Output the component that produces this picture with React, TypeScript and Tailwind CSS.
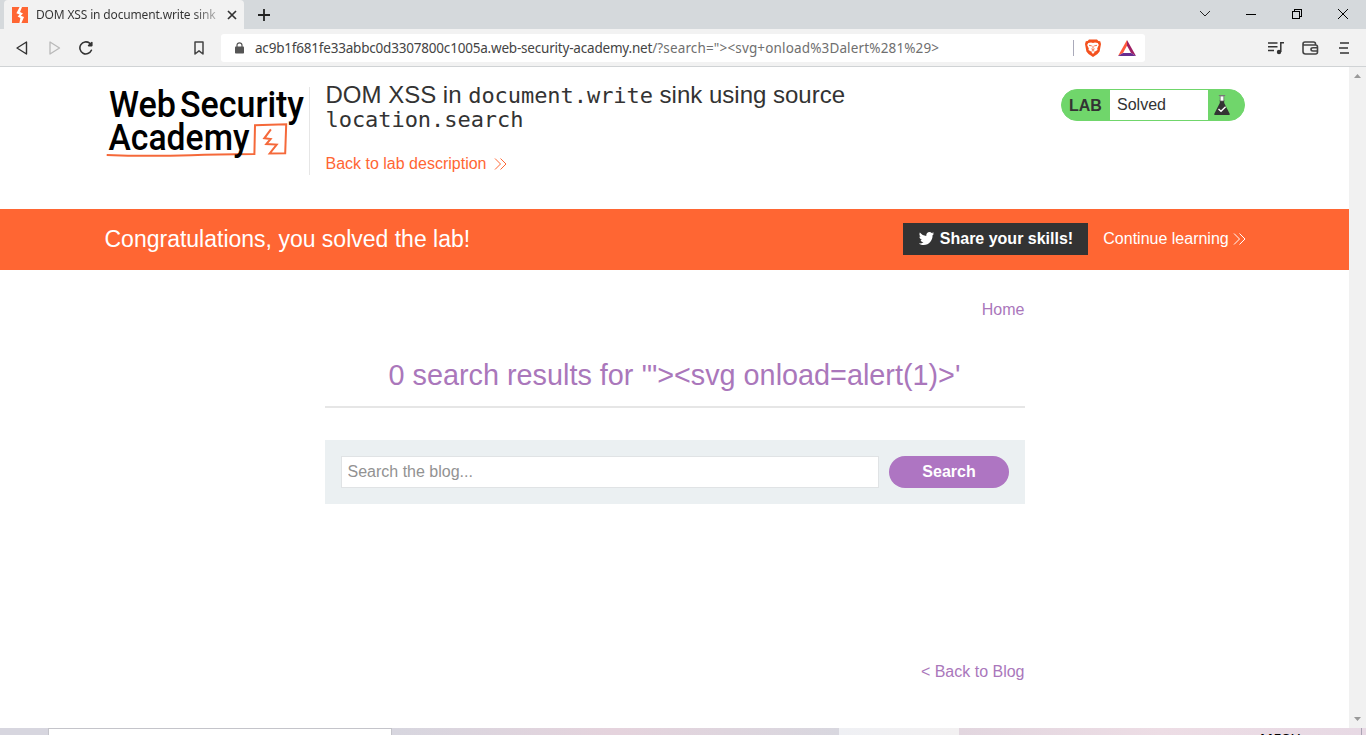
import React from "react";

function Chevrons({ color }: { color: string }) {
  return (
    <svg width="13" height="14" viewBox="0 0 13 14" fill="none" stroke={color} strokeWidth="1">
      <path d="M1 1.5 L6.5 7 L1 12.5 M6.5 1.5 L12 7 L6.5 12.5" />
    </svg>
  );
}

function TabStrip() {
  return (
    <div className="flex h-[29px] bg-[#d5d9dc] pl-1">
      <div className="flex w-[240px] items-center rounded-t-[4px] bg-[#f2f2f2] pl-2 pr-[7px]">
        <svg width="16" height="16" viewBox="0 0 16 16" className="shrink-0">
          <rect width="16" height="16" fill="#ff6633" />
          <path d="M7.6 0 L4.4 6.2 L7.6 7.4 L5.6 9.6 L8.4 11 L7.4 16 H9.4 L12 10 L8.8 8.8 L11 6.4 L8 5 L10 0 Z" fill="#fff" />
        </svg>
        <div className="ml-2 w-[182px] shrink-0 whitespace-nowrap bg-linear-to-r from-[#333] from-85% to-[#bbb] bg-clip-text font-['Noto_Sans',sans-serif] text-[12px] leading-[18px] tracking-[-0.16px] text-transparent">
          DOM XSS in document.write sink
        </div>
        <svg className="ml-[9px] shrink-0" width="10" height="10" viewBox="0 0 10 10" stroke="#333" strokeWidth="1.7">
          <path d="M1 1 L9 9 M9 1 L1 9" />
        </svg>
      </div>
      <svg className="ml-[14px] mt-[9px]" width="12" height="12" viewBox="0 0 12 12" stroke="#222" strokeWidth="1.8">
        <path d="M6 0 V12 M0 6 H12" />
      </svg>
      <div className="ml-auto flex h-[28px] items-center pr-[17px] text-black">
        <svg width="12" height="8" viewBox="0 0 12 8" fill="none" stroke="#222" strokeWidth="1"><path d="M1 1 L6 6 L11 1" /></svg>
        <svg className="ml-[35px]" width="10" height="10" viewBox="0 0 10 10" stroke="#000" shapeRendering="crispEdges"><path d="M0 5.5 H10" /></svg>
        <svg className="ml-[36px]" width="10" height="10" viewBox="0 0 10 10" fill="none" stroke="#000" shapeRendering="crispEdges"><path d="M.5 2.5 H7.5 V9.5 H.5 Z M2.5 2.5 V.5 H9.5 V7.5 H7.5" /></svg>
        <svg className="ml-[35px]" width="12" height="12" viewBox="0 0 12 12" stroke="#000" strokeWidth="1"><path d="M1 1 L11 11 M11 1 L1 11" /></svg>
      </div>
    </div>
  );
}

function Toolbar() {
  return (
    <div className="flex h-[38px] items-center border-b border-[#d0d3d5] bg-[#f2f2f2]">
      <svg className="ml-[16px]" width="12" height="14" viewBox="0 0 12 14" fill="none" stroke="#333" strokeWidth="1.4" strokeLinejoin="round"><path d="M10.5 1 V13 L1 7 Z" /></svg>
      <svg className="ml-[21px]" width="12" height="14" viewBox="0 0 12 14" fill="none" stroke="#b9b9b9" strokeWidth="1.3" strokeLinejoin="round"><path d="M1 1 V13 L10.5 7 Z" /></svg>
      <svg className="ml-[18px]" width="14" height="14" viewBox="0 0 14 14" fill="none" stroke="#333" strokeWidth="1.6" strokeLinecap="round">
        <path d="M12.4 9.3 A6 6 0 1 1 10.6 2.2" />
        <path d="M9.6 4.6 H12.8 V1.6 Q10.8 2.6 9.6 4.6 Z" fill="#333" strokeLinejoin="round" />
      </svg>
      <svg className="ml-[101px]" width="10" height="14" viewBox="0 0 10 14" fill="none" stroke="#444" strokeWidth="1.5" strokeLinejoin="round"><path d="M1 1 H9 V13 L5 9.8 L1 13 Z" /></svg>
      <div className="ml-[17px] flex h-[28px] w-[924px] items-center rounded-[3px] bg-white">
        <svg className="ml-[14px] shrink-0" width="9" height="12" viewBox="0 0 9 12">
          <path d="M2 5 V3.3 A2.5 2.5 0 0 1 7 3.3 V5" fill="none" stroke="#555" strokeWidth="1.2" />
          <rect x="0" y="4.5" width="9" height="7" rx=".8" fill="#555" />
        </svg>
        <div className="ml-[11px] w-[818px] whitespace-nowrap font-['Noto_Sans',sans-serif] text-[13.5px] leading-[20px] text-[#6f6f6f]">
          <span className="tracking-[-0.2px] text-[#444]">ac9b1f681fe33abbc0d3307800c1005a.web-security-academy.net</span>
          <span className="tracking-[0.15px]">{'/?search="><svg+onload%3Dalert%281%29>'}</span>
        </div>
        <div className="h-[16px] w-px shrink-0 bg-[#aaaaba]" />
        <svg className="ml-[11px] shrink-0" width="16" height="18" viewBox="0 0 16 18">
          <path d="M4 0.5 H12 L13.4 2 L15.2 2.2 L16 5 L14.6 12.5 L12.5 15 L8 18 L3.5 15 L1.4 12.5 L0 5 L.8 2.2 L2.6 2 Z" fill="#f4511e" />
          <path d="M3.3 4 L6 3.5 L8 4 L10 3.5 L12.7 4 L13.8 6 L12.2 9.5 L12.5 11 L10 12.5 L8 15 L6 12.5 L3.5 11 L3.8 9.5 L2.2 6 Z" fill="#fff" />
          <path d="M4 6.3 L6.8 6.9 M12 6.3 L9.2 6.9 M8 6.8 V9.6 M6.4 9.8 L8 10.6 L9.6 9.8 M6.5 12.3 L8 11.5 L9.5 12.3" fill="none" stroke="#f4511e" strokeWidth=".8" />
        </svg>
        <svg className="ml-[17px] shrink-0" width="18" height="16" viewBox="0 0 18 16">
          <path d="M9 0 L0 16 L5 12.9 L9 5.8 Z" fill="#ff5a3c" />
          <path d="M9 0 L18 16 L13 12.9 L9 5.8 Z" fill="#9e1f63" />
          <path d="M0 16 H18 L13 12.9 H5 Z" fill="#662d91" />
        </svg>
      </div>
      <svg className="ml-[123px]" width="16" height="14" viewBox="0 0 16 14" fill="none" stroke="#333" strokeWidth="1.5">
        <path d="M0 2 H9.5 M0 5.7 H9.5 M0 9.4 H6 M12.8 11 V1.8 H16" />
        <circle cx="11" cy="11" r="2.2" fill="#333" stroke="none" />
      </svg>
      <svg className="ml-[18px]" width="17" height="14" viewBox="0 0 17 14" fill="none" stroke="#444" strokeWidth="1.6">
        <path d="M13.5 4 V3 Q13.5 1 11.5 1 H3 Q1 1 1 3 V10.5 Q1 13 3.5 13 H13.5 Q15.5 13 15.5 11 V6 Q15.5 4 13.5 4 H3 Q1 4 1 2.7 M15.5 10 H11 Q9 10 9 8.3 Q9 6.7 11 6.7 H15.5" />
      </svg>
      <svg className="ml-[20px]" width="10" height="12" viewBox="0 0 10 12" stroke="#333" strokeWidth="1.5"><path d="M1 1 H10 M0 6 H9 M1 11 H10" /></svg>
    </div>
  );
}

function Logo() {
  return (
    <svg width="200" height="76" viewBox="0 0 200 76" className="shrink-0 overflow-visible">
      <path
        d="M164.9 42.3 L158.3 51.3 L164.6 52 L160.3 57 L170.7 57.6 L163.7 66.4 L179.2 66.2 L180.2 37.3 L149 38.3 L148.4 67 Q110 67.2 85 68.2 Q40 69.6 0.7 68"
        fill="none"
        stroke="#f5693a"
        strokeWidth="2"
      />
      <g fontFamily="Roboto, sans-serif" fontSize="36.5" fontWeight="500" fill="#000">
        <text x="3" y="30" textLength="67" lengthAdjust="spacingAndGlyphs">Web</text>
        <text x="74" y="30" textLength="124" lengthAdjust="spacingAndGlyphs">Security</text>
        <text x="2.5" y="62.8" textLength="141" lengthAdjust="spacingAndGlyphs">Academy</text>
      </g>
    </svg>
  );
}

function LabStatus() {
  return (
    <div className="ml-auto mt-[22px] flex h-[32px] w-[184px] overflow-hidden rounded-full border border-[#70d66b] bg-[#70d66b]">
      <div className="w-[48px] pl-[7px] text-[16px] font-bold leading-[31px] text-[#333]">LAB</div>
      <div className="w-[98px] bg-white pl-[7px] text-[16px] leading-[29px] text-[#333]">Solved</div>
      <svg className="ml-[6px] mt-[4px]" width="16" height="22" viewBox="0 0 16 22">
        <path d="M5.8 6 H10.2 V9 L15.8 20 Q16 21 15 21 H1 Q0 21 .2 20 L5.8 9 Z" fill="#333" />
        <path d="M6.2 2 H9.8 V7 H6.2 Z" fill="#fff" stroke="#666" strokeWidth=".7" />
        <path d="M4.8 1.5 H11.2" stroke="#777" />
        <path d="M4.5 15 L7 17.3 L11.6 12.8" fill="none" stroke="#fff" strokeWidth="1.4" />
      </svg>
    </div>
  );
}

function LabHeader() {
  return (
    <header className="flex h-[142px] pl-[106px] pr-[104px]">
      <div className="mt-[20px] flex h-[88px] w-[204px] border-r border-[#e6e6e6]"><Logo /></div>
      <div className="ml-[15.5px] pt-[16px]">
        <h2 className="text-[24px] leading-[24px] text-[#333]">
          DOM XSS in <code className="font-['DejaVu_Sans_Mono',monospace] text-[22px] leading-[20px] tracking-[-0.05px]">document.write</code> sink using source
          <br />
          <code className="font-['DejaVu_Sans_Mono',monospace] text-[22px] leading-[20px] tracking-[-0.05px]">location.search</code>
        </h2>
        <a className="mt-[24px] flex items-center text-[16px] leading-[18px] text-[#ff6633]">
          <span className="mr-2">Back to lab description</span>
          <Chevrons color="#ff6633" />
        </a>
      </div>
      <LabStatus />
    </header>
  );
}

function SolvedBanner() {
  return (
    <section className="flex h-[61px] items-center bg-[#ff6633] pb-[2px] pl-[104.5px] pr-[103px] text-white">
      <h4 className="text-[23px] leading-[28px]">Congratulations, you solved the lab!</h4>
      <button className="ml-auto flex h-[32px] w-[185px] items-center bg-[#333] pl-[16px] text-[16px] font-bold">
        <svg width="15" height="13" viewBox="1.8 4 20.5 17" preserveAspectRatio="none" className="mr-[6px] shrink-0">
          <path fill="#fff" d="M22.46 6c-.77.35-1.6.58-2.46.69.88-.53 1.56-1.37 1.88-2.38-.83.5-1.75.85-2.72 1.05C18.37 4.5 17.26 4 16 4c-2.35 0-4.27 1.92-4.27 4.29 0 .34.04.67.11.98C8.28 9.09 5.11 7.38 3 4.79c-.37.63-.58 1.37-.58 2.15 0 1.49.75 2.81 1.91 3.56-.71 0-1.37-.2-1.95-.5v.03c0 2.08 1.48 3.82 3.44 4.21a4.22 4.22 0 0 1-1.93.07 4.28 4.28 0 0 0 4 2.98 8.521 8.521 0 0 1-5.33 1.84c-.34 0-.68-.02-1.02-.06C3.44 20.29 5.7 21 8.12 21 16 21 20.33 14.46 20.33 8.79c0-.19 0-.37-.01-.56.84-.6 1.56-1.36 2.14-2.23z" />
        </svg>
        <span className="whitespace-nowrap">Share your skills!</span>
      </button>
      <a className="ml-[15.5px] flex items-center text-[16px]">
        <span className="mr-[4.3px]">Continue learning</span>
        <Chevrons color="#ffffff" />
      </a>
    </section>
  );
}

function Blog() {
  return (
    <main className="mx-auto flex w-[700px] flex-1 flex-col text-[#aa77bb]">
      <a className="mt-[30px] self-end text-[16px] leading-[20px]">Home</a>
      <h1 className="mt-[35px] h-[53px] whitespace-nowrap border-b-2 border-[#e6e6e6] text-center text-[28.8px] leading-[40px]">
        {"0 search results for '\"><svg onload=alert(1)>'"}
      </h1>
      <form className="mt-[32px] flex h-[64px] gap-[10px] bg-[#ebf0f2] p-4">
        <input
          className="h-[32px] w-[538px] border border-[#e0e3e5] bg-white px-[6px] text-[16px] text-[#333] placeholder:text-[#929292]"
          placeholder="Search the blog..."
        />
        <button type="button" className="h-[32px] w-[120px] rounded-full bg-[#ae75c2] pl-px text-[16px] font-bold text-white">Search</button>
      </form>
      <a className="mt-[158px] self-end text-[16px] leading-[20px]">{"< Back to Blog"}</a>
    </main>
  );
}

export default function App() {
  return (
    <div className="flex h-[735px] w-[1366px] flex-col overflow-hidden bg-white font-['Liberation_Sans',sans-serif]">
      <TabStrip />
      <Toolbar />
      <div className="flex h-[661px]">
        <div className="flex w-[1349px] flex-col">
          <LabHeader />
          <SolvedBanner />
          <Blog />
        </div>
        <div className="flex w-[17px] flex-col items-center justify-between bg-[#f1f1f1] py-[6px]">
          <svg width="7" height="6" viewBox="0 0 7 6"><path d="M0 5 L3.5 1 L7 5 Z" fill="#999" /></svg>
          <svg width="7" height="6" viewBox="0 0 7 6"><path d="M0 1 L3.5 5 L7 1 Z" fill="#999" /></svg>
        </div>
      </div>
      <div className="flex h-[7px]">
        <div className="w-[48px] bg-[#d7d6df]" />
        <div className="w-[344px] border-x border-t border-[#c4c4ca] bg-white" />
        <div className="w-[447px] bg-linear-to-r from-[#d7d6df] via-[#e5d3dd] to-[#d8d7df]" />
        <div className="w-[120px] bg-linear-to-r from-[#eff0f4] to-[#f2f0f1]" />
        <div className="h-[7px] w-[402px] overflow-hidden bg-linear-to-r from-[#e2d6df] via-[#eddde5] to-[#e7d9e4] pl-[301px] text-[14px] leading-[14px] text-black">
          <div className="mt-[4px] font-['Noto_Sans',sans-serif] font-medium tracking-[0.7px]">MESU</div>
        </div>
        <div className="flex-1 border-l border-[#aaa4b4] bg-[#e7d9e4]" />
      </div>
    </div>
  );
}
